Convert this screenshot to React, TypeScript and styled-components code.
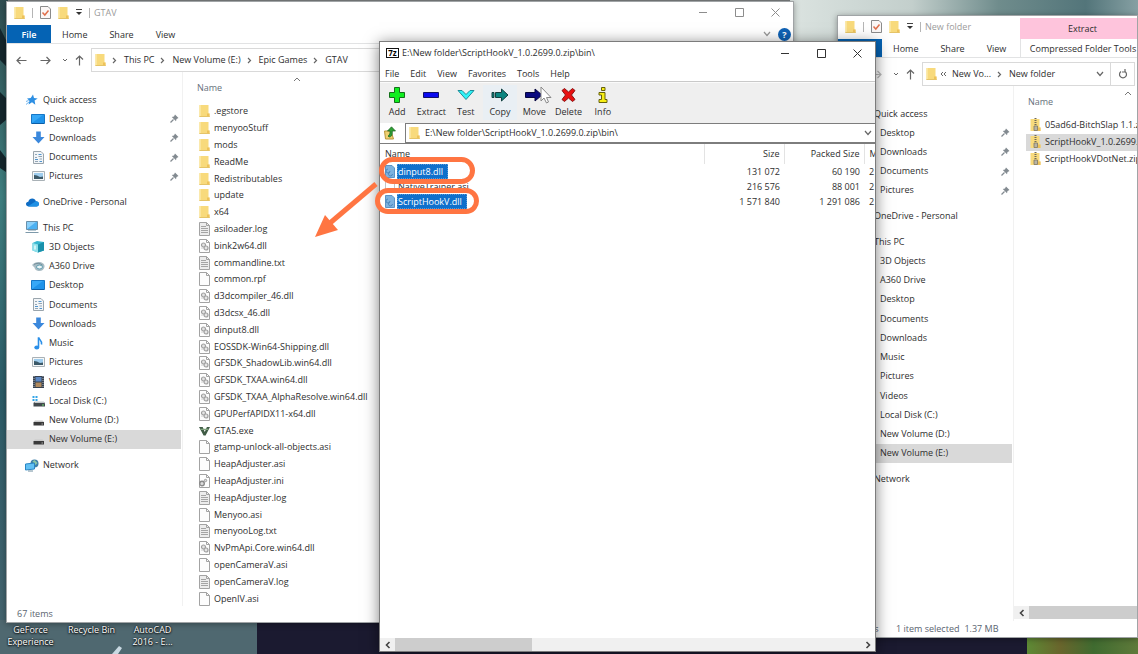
import React from "react";
import styled, { createGlobalStyle, css } from "styled-components";

const GlobalStyle = createGlobalStyle`
  * { box-sizing: border-box; }
  body {
    margin: 0;
    font-family: "Open Sans", "Noto Sans", sans-serif;
    font-size: 9px;
    line-height: 14px;
    color: #2e2e2e;
  }
  button, input {
    font: inherit;
    color: inherit;
    border: 0;
    background: none;
    padding: 0;
    margin: 0;
    text-align: left;
    white-space: nowrap;
  }
  ul { list-style: none; margin: 0; padding: 0; }
  svg { display: block; flex: none; }
`;

/* ---------- Icons ---------- */

type IconName =
  | "folder" | "zip" | "text" | "dll" | "blank" | "ini" | "gta"
  | "star" | "desktop" | "download" | "document" | "picture" | "cloud" | "pc"
  | "cube" | "a360" | "music" | "video" | "disk" | "drive" | "network";

const Sheet = ({ children, fill = "#fdfdfd" }: { children?: React.ReactNode; fill?: string }) => (
  <svg width="11" height="14" viewBox="0 0 11 14">
    <path d="M0.5 0.5H7.5L10.5 3.5V13.5H0.5Z" fill={fill} stroke="#a3a3a3" />
    <path d="M7.5 0.5V3.5H10.5" fill="none" stroke="#a3a3a3" />
    {children}
  </svg>
);

const Folder = () => (
  <svg width="11" height="14" viewBox="0 0 11 14">
    <path d="M0.5 1H9.5V9.5H10.5V13H0.5Z" fill="#f8da7c" />
    <path d="M8 9.5H10.5V13H8Z" fill="#eec25a" />
    <path d="M0.5 1H2V13H0.5Z" fill="#fbe59c" />
    <path d="M0.5 12.5H10.5" stroke="#e5c468" />
  </svg>
);

const Monitor = () => (
  <svg width="14" height="12" viewBox="0 0 14 12">
    <path d="M0.5 1.5H13.5V10.5H0.5Z" fill="#1f93ea" stroke="#1677c7" />
    <path d="M1 10L12 2H1Z" fill="#36a8f7" />
    <path d="M1 10.5H13" stroke="#0c5da5" />
  </svg>
);

const icons: Record<IconName, () => React.ReactElement> = {
  folder: Folder,
  zip: () => (
    <svg width="11" height="14" viewBox="0 0 11 14">
      <path d="M0.5 1H9.5V9.5H10.5V13H0.5Z" fill="#f8da7c" />
      <path d="M8 9.5H10.5V13H8Z" fill="#eec25a" />
      <path d="M5.5 0V9" stroke="#6f6a58" strokeWidth="2" strokeDasharray="1 1" />
      <path d="M4 8H7.5V12.5H4Z" fill="#b9b4a4" stroke="#7d7663" strokeWidth="0.8" />
    </svg>
  ),
  text: () => (
    <Sheet fill="#ececec">
      <path d="M2 4.5H7M2 6.5H9M2 8.5H9M2 10.5H9" stroke="#9c9c9c" strokeWidth="0.9" />
    </Sheet>
  ),
  dll: () => (
    <Sheet>
      <circle cx="4.5" cy="6" r="2" fill="#e4e4e4" stroke="#a0a0a0" strokeWidth="1.2" />
      <circle cx="7" cy="9" r="2" fill="#e4e4e4" stroke="#a0a0a0" strokeWidth="1.2" />
      <circle cx="3" cy="9" r="0.6" fill="#a0a0a0" />
    </Sheet>
  ),
  blank: () => <Sheet />,
  ini: () => (
    <Sheet>
      <circle cx="3" cy="9.5" r="2.3" fill="#ddd" stroke="#8a8a8a" strokeWidth="1.4" />
      <circle cx="6.5" cy="6.5" r="1.2" fill="#ddd" stroke="#9a9a9a" />
    </Sheet>
  ),
  gta: () => (
    <svg width="11" height="12" viewBox="0 0 12 12">
      <path d="M0 1.5H4L6.3 7L8.6 1.5H12L7.2 11H5Z" fill="#3f5b45" />
      <path d="M1 3.5H10.5L9.8 5H2Z" fill="#7ea27c" />
    </svg>
  ),
  star: () => (
    <svg width="12" height="12" viewBox="0 0 12 12">
      <path d="M7 0.5L8 4L11.7 4.4L8.6 6.6L9.3 10.8L6 8.2L2.6 10.6L3.4 6.8L1 4.6L4.7 4Z" fill="#2d8fe3" />
      <path d="M0 10.5L3.5 7.5M0 7.5L2.5 6.5" stroke="#6db4f0" />
    </svg>
  ),
  desktop: Monitor,
  download: () => (
    <svg width="13" height="13" viewBox="0 0 13 13">
      <path d="M4.2 0.5H8.8V6H12.5L6.5 12.5L0.5 6H4.2Z" fill="#3b88dc" />
    </svg>
  ),
  document: () => (
    <svg width="11" height="13" viewBox="0 0 11 13">
      <path d="M0.5 0.5H8L10.5 3V12.5H0.5Z" fill="#f2f5f8" stroke="#9aa5ad" />
      <path d="M5.5 3.5H8.5M2 8.5H5M6.5 10.5H9" stroke="#4f94ce" />
      <path d="M2 3.5H4M5.5 5.5H9M2 6.5H4M2 10.5H5M6.5 8H9" stroke="#93a5b4" />
    </svg>
  ),
  picture: () => (
    <svg width="13" height="10" viewBox="0 0 13 10">
      <path d="M0.5 0.5H12.5V9.5H0.5Z" fill="#f5f7f8" stroke="#a9b1b6" />
      <path d="M2 2H11V8H2Z" fill="#9fcdee" />
      <path d="M2 4L5 4.5L8 6L11 5.5V8H2Z" fill="#3c5968" />
    </svg>
  ),
  cloud: () => (
    <svg width="13" height="9" viewBox="0 0 13 9">
      <path d="M3 8.5C1 8.5 0 7.5 0 6C0 4.6 1 3.8 2.3 3.7C2.9 1.7 4.3 0.5 6.3 0.5C8 0.5 9.4 1.6 9.9 3.2C11.7 3.2 13 4.3 13 6C13 7.5 12 8.5 10.5 8.5Z" fill="#0f6cc4" />
      <path d="M2 8.3L9.8 3.3C11.7 3.2 13 4.3 13 6C13 7.5 12 8.5 10.5 8.5H3Z" fill="#2191e4" />
    </svg>
  ),
  pc: () => (
    <svg width="14" height="13" viewBox="0 0 14 13">
      <path d="M1.5 0.5H12.5V8.5H1.5Z" fill="#4db1f2" stroke="#6a90aa" />
      <path d="M2 8L11 1H2Z" fill="#8bd0fa" />
      <path d="M0.5 11.5H13.5" stroke="#7d99aa" />
      <path d="M3 9.5H11" stroke="#b9cad4" />
    </svg>
  ),
  cube: () => (
    <svg width="13" height="13" viewBox="0 0 13 13">
      <path d="M0.5 3L5 1L12 2V10.5L6 12.5L0.5 10.5Z" fill="#37b6cf" />
      <path d="M0.5 3L6 4.5V12.5L0.5 10.5Z" fill="#8fe0ea" />
      <path d="M6 4.5L12 2V10.5L6 12.5Z" fill="#1a91ab" />
      <path d="M3 5.5V9.5" stroke="#e8fbfd" strokeWidth="1.5" />
    </svg>
  ),
  a360: () => (
    <svg width="13" height="11" viewBox="0 0 13 11">
      <path d="M0 4C2 1.500 5 0.500 8 1C11 1.500 13 3.500 12.500 6C12 8.500 9.500 10.500 6.500 10C4 9.500 2.500 8 2.500 6.500Z" fill="#a9bcc4" />
      <path d="M2 3.500C4.500 1.800 8 2 10.500 4" fill="none" stroke="#76909c" />
      <ellipse cx="7.5" cy="6" rx="3" ry="2" fill="#eef5f7" stroke="#5c9db0" />
    </svg>
  ),
  music: () => (
    <svg width="11" height="13" viewBox="0 0 11 13">
      <path d="M5.5 0.5V10" stroke="#2a8fe8" strokeWidth="1.6" />
      <path d="M5.5 0.5C6 3 9.5 3.5 8.5 7.5" fill="none" stroke="#2a8fe8" strokeWidth="1.6" />
      <ellipse cx="3.8" cy="10.4" rx="2.5" ry="2" fill="#2a8fe8" />
    </svg>
  ),
  video: () => (
    <svg width="11" height="12" viewBox="0 0 11 12">
      <path d="M0 0H11V12H0Z" fill="#39424f" />
      <path d="M2.5 1H8.5V5.5H2.5Z" fill="#5b86c2" />
      <path d="M2.5 6.5H8.5V11H2.5Z" fill="#b08a5e" />
      <path d="M1 0V12M10 0V12" stroke="#a9b4bf" strokeDasharray="1 1" />
    </svg>
  ),
  disk: () => (
    <svg width="13" height="12" viewBox="0 0 13 12">
      <path d="M0.5 1H2.5V3H0.5ZM3.5 1H5.5V3H3.5ZM0.5 4H2.5V6H0.5ZM3.5 4H5.5V6H3.5Z" fill="#35a6e8" />
      <path d="M2 7H12L13 8.5V11.5H1.5V8.5Z" fill="#43494d" />
      <path d="M2.5 6.5H12V8H2.5Z" fill="#c3c8cb" />
      <path d="M10 10H12" stroke="#6fdc72" />
    </svg>
  ),
  drive: () => (
    <svg width="13" height="12" viewBox="0 0 13 12">
      <path d="M1.5 8H12V11.5H1.5Z" fill="#3b3b3b" />
      <path d="M3 6.5H10.5L12 8H1.5Z" fill="#c9c9c9" />
      <path d="M9.5 10H11" stroke="#aaa" />
    </svg>
  ),
  network: () => (
    <svg width="14" height="13" viewBox="0 0 14 13">
      <circle cx="9.500" cy="4.500" r="4" fill="#3f7fa8" />
      <path d="M7.500 2.500L9.500 1L12.500 4L10.500 6Z" fill="#8cc6a4" />
      <path d="M0.500 5L9.500 4V10L0.500 11Z" fill="#63c1f4" stroke="#2a86c4" />
      <path d="M3 12H8" stroke="#6f8ea0" />
    </svg>
  ),
};

const Icon = ({ name }: { name: IconName }) => icons[name]();

const Stroke = ({ w, h, d, color = "#666", sw = 1 }: { w: number; h: number; d: string; color?: string; sw?: number }) => (
  <svg width={w} height={h} viewBox={`0 0 ${w} ${h}`}>
    <path d={d} fill="none" stroke={color} strokeWidth={sw} />
  </svg>
);
const ChevronRight = () => <Stroke w={5} h={7} d="M1 1L3.5 3.5L1 6" sw={1.2} />;
const ChevronLeft = () => <Stroke w={6} h={8} d="M4.5 1L1.5 4L4.5 7" sw={1.6} color="#444" />;
const ScrollRight = () => <Stroke w={6} h={8} d="M1.5 1L4.5 4L1.5 7" sw={1.6} color="#444" />;
const ChevronDown = ({ color }: { color?: string }) => <Stroke w={8} h={6} d="M1 1L4 4.5L7 1" sw={1.2} color={color} />;
const ChevronUp = () => <Stroke w={8} h={5} d="M1 4L4 1L7 4" color="#777" />;

const Pin = () => (
  <svg width="9" height="9" viewBox="0 0 9 9">
    <path d="M5 0.5L8.5 4L7.5 4.5L6.5 5L6 7.2L1.8 3L4 2.5Z" fill="#828a90" />
    <path d="M3.5 5.5L0.5 8.5" stroke="#828a90" strokeWidth="1.2" />
  </svg>
);

const CheckSheet = () => (
  <svg width="11" height="13" viewBox="0 0 11 13">
    <path d="M0.5 0.5H8L10.5 3V12.5H0.5Z" fill="#fbf7f6" stroke="#8b8b8b" />
    <path d="M2.5 6.5L4.8 9L8.5 4.5" fill="none" stroke="#e0704c" strokeWidth="1.5" />
  </svg>
);

/* ---------- Desktop ---------- */

const Desktop = styled.main`
  position: relative;
  min-height: 100vh;
  overflow: hidden;
  background: #1b1b31;
`;

const Wallpaper = styled.svg`
  position: absolute;
  inset: 0;
  width: 100%;
  height: 100%;
`;

const Shortcuts = styled.ul`
  position: absolute;
  left: 0;
  bottom: 6px;
  display: flex;
`;

const Shortcut = styled.li`
  width: 61px;
  padding: 0 5px;
  text-align: center;
  line-height: 12px;
  color: #fff;
  text-shadow: 0 1px 2px #000, 0 0 2px #000;
`;

const Window = styled.section<{ $left: number; $top: number; $bottom: number; $width?: number; $active?: boolean }>`
  position: absolute;
  left: ${(p) => p.$left}px;
  top: ${(p) => p.$top}px;
  bottom: ${(p) => p.$bottom}px;
  ${(p) => (p.$width ? css`width: ${p.$width}px;` : css`right: 0;`)}
  display: flex;
  flex-direction: column;
  overflow: hidden;
  background: #fff;
  border: 1px solid ${(p) => (p.$active ? "#7c7c7c" : "#a0a4a6")};
  box-shadow: ${(p) => (p.$active ? "0 2px 14px rgba(0,0,0,.5)" : "0 1px 6px rgba(0,0,0,.35)")};
`;

/* ---------- Explorer ---------- */

const Header = styled.header`
  display: flex;
  flex: none;
  border-bottom: 1px solid #e2e3e4;
`;

const HeaderMain = styled.div<{ $fixed?: boolean }>`
  flex: ${(p) => (p.$fixed ? "0 0 182px" : "1")};
  min-width: 0;
`;

const TitleBar = styled.div`
  display: flex;
  align-items: center;
  height: 23px;
  padding: 0 0 2px 7px;
`;

const QuickTools = styled.div`
  display: flex;
  align-items: center;
  gap: 7px;
  flex: 1;
`;

const Separator = styled.span`
  width: 1px;
  height: 10px;
  background: #b5b5b5;
`;

const WindowTitle = styled.h1`
  margin: 0 0 0 -3px;
  font-size: 9px;
  font-weight: 400;
  color: #9b9b9b;
  white-space: nowrap;
`;

const WindowButtonGroup = styled.div`
  display: flex;
`;

const WindowButton = styled.button`
  width: 36px;
  height: 20px;
  display: flex;
  align-items: center;
  justify-content: center;
`;

const Tabs = styled.div`
  display: flex;
  align-items: center;
  height: 18px;
`;

const Tab = styled.button<{ $file?: boolean }>`
  height: 18px;
  padding: 1px 11px 0;
  ${(p) => p.$file && css`
    width: 44px;
    padding: 1px 0 0;
    text-align: center;
    background: #0563b4;
    color: #fff;
    font-weight: 600;
  `}
`;

const TabsEnd = styled.div`
  margin-left: auto;
  padding-right: 2px;
  display: flex;
  align-items: center;
  gap: 7px;
`;

const HelpButton = styled.button`
  width: 13px;
  height: 13px;
  border-radius: 50%;
  background: #0f62b5;
  color: #fff;
  font-weight: 700;
  text-align: center;
  line-height: 13px;
`;

const ContextTab = styled.div`
  flex: 0 0 125px;
  padding-top: 2px;
  display: flex;
  flex-direction: column;
`;

const ContextTitle = styled.div`
  height: 21px;
  line-height: 21px;
  text-align: center;
  background: #fec4dc;
`;

const ContextButton = styled.button`
  height: 18px;
  padding-top: 1px;
  text-align: center;
  border-left: 1px solid #e2e3e4;
`;

const AddressRow = styled.nav`
  display: flex;
  align-items: center;
  flex: none;
  height: 28px;
  padding: 4px 2px 0 7px;
`;

const NavButton = styled.button<{ $w: number }>`
  width: ${(p) => p.$w}px;
  height: 20px;
  display: flex;
  align-items: center;
  justify-content: center;
`;

const AddressBox = styled.div`
  flex: 1;
  min-width: 0;
  height: 24px;
  padding-left: 3px;
  display: flex;
  align-items: center;
  border: 1px solid #d9d9d9;
`;

const Crumb = styled.span<{ $collapsed?: boolean }>`
  display: flex;
  align-items: center;
  gap: ${(p) => (p.$collapsed ? 5 : 7)}px;
  padding-left: ${(p) => (p.$collapsed ? 3 : 6)}px;
`;

const AddressEnd = styled.div`
  margin-left: auto;
  height: 22px;
  display: flex;
  align-items: center;
`;

const RefreshButton = styled(NavButton)`
  margin-left: 6px;
  height: 22px;
  border-left: 1px solid #d9d9d9;
`;

const Body = styled.div`
  display: flex;
  flex: 1;
  min-height: 0;
`;

const Sidebar = styled.aside`
  flex: 0 0 176px;
  padding-top: 18px;
  display: flex;
  flex-direction: column;
  gap: 6px;
  border-right: 1px solid #f1f1f1;
`;

const NavGroup = styled.ul<{ $height: number }>`
  flex: none;
  height: ${(p) => p.$height}px;
  display: grid;
  grid-auto-rows: 1fr;
`;

const NavItem = styled.button<{ $child?: boolean; $selected?: boolean }>`
  display: flex;
  align-items: center;
  width: 174px;
  height: 100%;
  padding: 0 2px 0 ${(p) => (p.$child ? 24 : 18)}px;
  background: ${(p) => (p.$selected ? "#d9d9d9" : "none")};
`;

const NavIcon = styled.span`
  width: 14px;
  margin-right: 4px;
  display: flex;
  justify-content: center;
`;

const PinSlot = styled.span`
  margin-left: auto;
`;

const ListPane = styled.div`
  flex: 1;
  min-width: 0;
  display: flex;
  flex-direction: column;
`;

const ListScroller = styled.div`
  flex: 1;
  min-height: 0;
  overflow: hidden;
  padding-left: 12px;
`;

const ListHeader = styled.div`
  position: relative;
  height: 31px;
  padding: 9px 0 0 2px;
  color: #66707c;
`;

const SortMark = styled.span`
  position: absolute;
  left: 98px;
  top: 5px;
`;

const FileList = styled.ul`
  height: 504px;
  display: grid;
  grid-template-rows: repeat(30, 1fr);
`;

const FileRow = styled.button<{ $selected?: boolean }>`
  display: flex;
  align-items: center;
  gap: 4px;
  width: 100%;
  height: 100%;
  padding-left: 4px;
  background: ${(p) => (p.$selected ? "#d9d9d9" : "none")};
`;

const ScrollBar = styled.div<{ $inset?: boolean }>`
  display: flex;
  flex: none;
  height: 13px;
  margin-bottom: ${(p) => (p.$inset ? 2 : 0)}px;
  background: #f0f0f0;
`;

const ScrollButton = styled.button`
  width: 15px;
  height: 13px;
  display: flex;
  align-items: center;
  justify-content: center;
`;

const ScrollThumb = styled.div<{ $width?: number }>`
  height: 13px;
  background: #cdcdcd;
  ${(p) => (p.$width ? css`width: ${p.$width}px; margin-right: auto;` : css`flex: 1;`)}
`;

const StatusBar = styled.footer`
  flex: none;
  display: flex;
  height: 16px;
  line-height: 16px;
  padding-left: 10px;
  color: #5a6470;
  white-space: nowrap;
`;

const StatusItem = styled.span`
  margin-right: 5px;
`;

const StatusCount = styled(StatusItem)`
  width: 43px;
`;

type Entry = [IconName, string];

const quickAccess: Entry[] = [
  ["desktop", "Desktop"],
  ["download", "Downloads"],
  ["document", "Documents"],
  ["picture", "Pictures"],
];

const thisPc: Entry[] = [
  ["cube", "3D Objects"],
  ["a360", "A360 Drive"],
  ["desktop", "Desktop"],
  ["document", "Documents"],
  ["download", "Downloads"],
  ["music", "Music"],
  ["picture", "Pictures"],
  ["video", "Videos"],
  ["disk", "Local Disk (C:)"],
  ["drive", "New Volume (D:)"],
  ["drive", "New Volume (E:)"],
];

const gameFiles: Entry[] = [
  ["folder", ".egstore"],
  ["folder", "menyooStuff"],
  ["folder", "mods"],
  ["folder", "ReadMe"],
  ["folder", "Redistributables"],
  ["folder", "update"],
  ["folder", "x64"],
  ["text", "asiloader.log"],
  ["dll", "bink2w64.dll"],
  ["text", "commandline.txt"],
  ["blank", "common.rpf"],
  ["dll", "d3dcompiler_46.dll"],
  ["dll", "d3dcsx_46.dll"],
  ["dll", "dinput8.dll"],
  ["dll", "EOSSDK-Win64-Shipping.dll"],
  ["dll", "GFSDK_ShadowLib.win64.dll"],
  ["dll", "GFSDK_TXAA.win64.dll"],
  ["dll", "GFSDK_TXAA_AlphaResolve.win64.dll"],
  ["dll", "GPUPerfAPIDX11-x64.dll"],
  ["gta", "GTA5.exe"],
  ["blank", "gtamp-unlock-all-objects.asi"],
  ["blank", "HeapAdjuster.asi"],
  ["ini", "HeapAdjuster.ini"],
  ["text", "HeapAdjuster.log"],
  ["blank", "Menyoo.asi"],
  ["text", "menyooLog.txt"],
  ["dll", "NvPmApi.Core.win64.dll"],
  ["blank", "openCameraV.asi"],
  ["text", "openCameraV.log"],
  ["blank", "OpenIV.asi"],
];

const zipFiles: Entry[] = [
  ["zip", "05ad6d-BitchSlap 1.1.zip"],
  ["zip", "ScriptHookV_1.0.2699.0.zip"],
  ["zip", "ScriptHookVDotNet.zip"],
];

const SideEntry = ({ icon, label, child, pinned, selected }: {
  icon: IconName; label: string; child?: boolean; pinned?: boolean; selected?: boolean;
}) => (
  <li>
    <NavItem type="button" $child={child} $selected={selected}>
      <NavIcon><Icon name={icon} /></NavIcon>
      {label}
      {pinned && <PinSlot><Pin /></PinSlot>}
    </NavItem>
  </li>
);

const WindowButtons = ({ color }: { color: string }) => (
  <WindowButtonGroup>
    <WindowButton type="button" aria-label="Minimize"><Stroke w={9} h={9} d="M0 4.5H8" color={color} /></WindowButton>
    <WindowButton type="button" aria-label="Maximize"><Stroke w={9} h={9} d="M0.5 0.5H8.5V8.5H0.5Z" color={color} /></WindowButton>
    <WindowButton type="button" aria-label="Close"><Stroke w={9} h={9} d="M0.5 0.5L8.5 8.5M8.5 0.5L0.5 8.5" color={color} /></WindowButton>
  </WindowButtonGroup>
);

const Explorer = ({ title, left, top, bottom, width, crumbs, collapsed, contextual, files, selectedFile, status }: {
  title: string; left: number; top: number; bottom: number; width?: number; crumbs: string[];
  collapsed?: boolean; contextual?: boolean; files: Entry[]; selectedFile?: number; status: string[];
}) => (
  <Window $left={left} $top={top} $bottom={bottom} $width={width} aria-label={title}>
    <Header>
      <HeaderMain $fixed={contextual}>
        <TitleBar>
          <QuickTools>
            <Folder />
            <Separator />
            <CheckSheet />
            <Folder />
            <svg width="6" height="7" viewBox="0 0 6 7"><path d="M0 0.5H6" stroke="#444" /><path d="M0 3H6L3 6Z" fill="#333" /></svg>
            <Separator />
            <WindowTitle>{title}</WindowTitle>
          </QuickTools>
          {!contextual && <WindowButtons color="#8d8d8d" />}
        </TitleBar>
        <Tabs>
          <Tab type="button" $file>File</Tab>
          <Tab type="button">Home</Tab>
          <Tab type="button">Share</Tab>
          <Tab type="button">View</Tab>
          {!contextual && (
            <TabsEnd>
              <ChevronDown color="#999" />
              <HelpButton type="button">?</HelpButton>
            </TabsEnd>
          )}
        </Tabs>
      </HeaderMain>
      {contextual && (
        <ContextTab>
          <ContextTitle>Extract</ContextTitle>
          <ContextButton type="button">Compressed Folder Tools</ContextButton>
        </ContextTab>
      )}
    </Header>
    <AddressRow aria-label="Address">
      <NavButton type="button" $w={14} aria-label="Back"><Stroke w={11} h={9} d="M10.5 4.5H1M4.5 1L1 4.5L4.5 8" sw={1.2} /></NavButton>
      <NavButton type="button" $w={34} aria-label="Forward"><Stroke w={11} h={9} d="M0.5 4.5H10M6.5 1L10 4.5L6.5 8" sw={1.2} color={contextual ? "#bbb" : "#666"} /></NavButton>
      <NavButton type="button" $w={6} aria-label="Recent"><Stroke w={6} h={5} d="M1 1L3 3L5 1" /></NavButton>
      <NavButton type="button" $w={23} aria-label="Up"><Stroke w={9} h={11} d="M4.5 10.5V1M1 4.5L4.5 1L8 4.5" sw={1.2} /></NavButton>
      <AddressBox>
        <Folder />
        {crumbs.map((c, i) => (
          <Crumb key={c} $collapsed={collapsed && i === 0}>
            {collapsed && i === 0 ? <Stroke w={7} h={7} d="M3 1L1 3L3 5M6 1L4 3L6 5" /> : <ChevronRight />}
            <button type="button">{c}</button>
          </Crumb>
        ))}
        <AddressEnd>
          <ChevronDown />
          <RefreshButton type="button" $w={24} aria-label="Refresh">
            <Stroke w={10} h={10} d="M3 2.5A3.5 3.5 0 1 0 7 2.5M7 0V3H4" sw={1.2} />
          </RefreshButton>
        </AddressEnd>
      </AddressBox>
    </AddressRow>
    <Body>
      <Sidebar>
        <NavGroup $height={96}>
          <SideEntry icon="star" label="Quick access" />
          {quickAccess.map(([icon, label]) => <SideEntry key={label} icon={icon} label={label} child pinned />)}
        </NavGroup>
        <NavGroup $height={20}>
          <SideEntry icon="cloud" label="OneDrive - Personal" />
        </NavGroup>
        <NavGroup $height={231}>
          <SideEntry icon="pc" label="This PC" />
          {thisPc.map(([icon, label]) => (
            <SideEntry key={label} icon={icon} label={label} child selected={label === "New Volume (E:)"} />
          ))}
        </NavGroup>
        <NavGroup $height={20}>
          <SideEntry icon="network" label="Network" />
        </NavGroup>
      </Sidebar>
      <ListPane>
        <ListScroller>
          <ListHeader>
            <button type="button">Name</button>
            <SortMark><ChevronUp /></SortMark>
          </ListHeader>
          <FileList>
            {files.map(([icon, name], i) => (
              <li key={name}>
                <FileRow type="button" $selected={i === selectedFile}>
                  <Icon name={icon} />
                  {name}
                </FileRow>
              </li>
            ))}
          </FileList>
        </ListScroller>
        {contextual && (
          <ScrollBar $inset>
            <ScrollButton type="button" aria-label="Scroll left"><ChevronLeft /></ScrollButton>
            <ScrollThumb />
          </ScrollBar>
        )}
      </ListPane>
    </Body>
    <StatusBar>
      <StatusCount>{status[0]}</StatusCount>
      {status.slice(1).map((s) => <StatusItem key={s}>{s}</StatusItem>)}
    </StatusBar>
  </Window>
);

/* ---------- Archive manager ---------- */

const ArchiveTitle = styled.div`
  flex: none;
  display: flex;
  align-items: center;
  height: 24px;
  padding: 0 0 2px 6px;
`;

const ArchiveName = styled.h1`
  flex: 1;
  margin: 0 0 0 3px;
  font-size: 9px;
  font-weight: 400;
  white-space: nowrap;
`;

const ZipBadge = styled.span`
  width: 13px;
  height: 10px;
  border: 1px solid #111;
  background: #fff;
  color: #000;
  font-size: 8px;
  font-weight: 700;
  line-height: 8px;
  text-align: center;
`;

const MenuBar = styled.div`
  flex: none;
  display: flex;
  gap: 11px;
  height: 16px;
  padding: 0 0 0 5px;
  border-bottom: 1px solid #c9c9c9;
`;

const ToolBar = styled.div`
  flex: none;
  height: 41px;
  padding-top: 2px;
  background: #efefef;
  border-top: 1px solid #fafafa;
`;

const ToolGrid = styled.div`
  display: grid;
  grid-template-columns: repeat(7, 1fr);
  width: 240px;
`;

const Tool = styled.button<{ $hover?: boolean }>`
  display: flex;
  flex-direction: column;
  align-items: center;
  height: 35px;
  background: ${(p) => (p.$hover ? "#e9eff4" : "none")};
`;

const ToolIcon = styled.span`
  height: 20px;
  display: flex;
  align-items: center;
`;

const PathRow = styled.div`
  flex: none;
  display: flex;
  align-items: center;
  height: 20px;
`;

const UpButton = styled.button`
  width: 25px;
  height: 20px;
  padding-left: 4px;
`;

const PathBox = styled.label`
  flex: 1;
  display: flex;
  align-items: center;
  gap: 5px;
  height: 20px;
  padding: 0 3px;
  border: 1px solid #7d7d7d;
  border-right: 0;
`;

const PathInput = styled.input`
  flex: 1;
  min-width: 0;
  outline: 0;
`;

const FileArea = styled.div`
  flex: 1;
  min-height: 0;
  overflow: hidden;
  border-top: 1px solid #7d7d7d;
`;

const FileTable = styled.table`
  width: 100%;
  table-layout: fixed;
  border-collapse: collapse;
  white-space: nowrap;
  th {
    height: 20px;
    padding: 0 4px 0 5px;
    font-weight: 400;
    text-align: right;
    border-right: 1px solid #e3e3e3;
  }
  td {
    height: 15px;
    padding: 0 4px 0 5px;
    line-height: 15px;
    text-align: right;
    overflow: hidden;
  }
  th:first-child { text-align: left; }
  td:first-child { text-align: left; }
  th:last-child { text-align: left; border: 0; overflow: hidden; }
  td:last-child { text-align: left; }
`;

const FileName = styled.span<{ $selected?: boolean }>`
  display: inline-block;
  padding: 0 2px 0 1px;
  height: 15px;
  ${(p) => p.$selected && css`
    background: #0f70cc;
    color: #fff;
    outline: 1px dotted #5c9ad6;
    outline-offset: -1px;
    padding-right: 5px;
  `}
`;

const NameCell = styled.span`
  display: flex;
  align-items: center;
  gap: 2px;
  height: 15px;
`;

const MiniFile = ({ tinted }: { tinted?: boolean }) => (
  <svg width="10" height="13" viewBox="0 0 10 13">
    <path d="M0.5 0.5H7L9.5 3V12.5H0.5Z" fill={tinted ? "#7db2df" : "#fff"} stroke={tinted ? "#5b93c6" : "#c4c4c4"} />
    {tinted && <path d="M3 4A2 2 0 1 0 5 6M5 7A2 2 0 1 0 7.5 9" fill="none" stroke="#4a86be" />}
  </svg>
);

const tools: { label: string; art: React.ReactElement }[] = [
  { label: "Add", art: <svg width="16" height="16" viewBox="0 0 16 16"><path d="M5.5 0.5H10.5V5.5H15.5V10.5H10.5V15.5H5.5V10.5H0.5V5.5H5.5Z" fill="#10ee20" stroke="#13701a" /></svg> },
  { label: "Extract", art: <svg width="16" height="8" viewBox="0 0 16 8"><path d="M0.5 1.5H15.5V6.5H0.5Z" fill="#0a0af0" stroke="#10106a" /></svg> },
  { label: "Test", art: <svg width="18" height="12" viewBox="0 0 18 12"><path d="M1 1.5H5L9 5.5L13 1.5H17L9 10.5Z" fill="#2ff3f7" stroke="#1d8d98" /></svg> },
  { label: "Copy", art: <svg width="18" height="14" viewBox="0 0 18 14"><path d="M1 4.5H3V9.5H1ZM4.5 4.5H10.5V1L17 7L10.5 13V9.5H4.5Z" fill="#0b8580" stroke="#123f3e" /></svg> },
  { label: "Move", art: <svg width="18" height="14" viewBox="0 0 18 14"><path d="M0.5 4.5H10V1L17 7L10 13V9.5H0.5Z" fill="#0a0a80" stroke="#06063f" /></svg> },
  { label: "Delete", art: <svg width="15" height="14" viewBox="0 0 15 14"><path d="M3.5 0.5L7.5 4L11.5 0.5L14 2.5L10.5 7L14 11.5L11.5 13.5L7.5 10L3.5 13.5L1 11.5L4.5 7L1 2.5Z" fill="#e81010" stroke="#8a1414" /></svg> },
  { label: "Info", art: <svg width="10" height="16" viewBox="0 0 10 16"><path d="M3.5 0.5H7V3.5H3.5ZM1 5.5H7V12.5H9V15.5H1V12.5H3.5V8H1Z" fill="#f7ee14" stroke="#66610d" /></svg> },
];

const archiveRows = [
  { name: "dinput8.dll", size: "131 072", packed: "60 190", selected: true },
  { name: "NativeTrainer.asi", size: "216 576", packed: "88 001", selected: false },
  { name: "ScriptHookV.dll", size: "1 571 840", packed: "1 291 086", selected: true },
];

const archivePath = "E:\\New folder\\ScriptHookV_1.0.2699.0.zip\\bin\\";

const Archive = () => (
  <Window $left={379} $top={41} $bottom={2} $width={497} $active aria-label="Archive">
    <ArchiveTitle>
      <ZipBadge>7z</ZipBadge>
      <ArchiveName>{archivePath}</ArchiveName>
      <WindowButtons color="#333" />
    </ArchiveTitle>
    <MenuBar>
      {["File", "Edit", "View", "Favorites", "Tools", "Help"].map((m) => <button type="button" key={m}>{m}</button>)}
    </MenuBar>
    <ToolBar>
      <ToolGrid>
        {tools.map(({ label, art }) => (
          <Tool type="button" key={label} $hover={label === "Copy"}>
            <ToolIcon>{art}</ToolIcon>
            {label}
          </Tool>
        ))}
      </ToolGrid>
    </ToolBar>
    <PathRow>
      <UpButton type="button" aria-label="Up one level">
        <svg width="13" height="14" viewBox="0 0 13 14">
          <path d="M0.5 5H7L9.5 13H1.5Z" fill="#efd070" stroke="#b8953a" />
          <path d="M5 11C8 11 8.5 8 8.3 5H11.5L7.5 0.8L3.5 5H6C6 7 6 9 4 10Z" fill="#2f9f35" stroke="#1c6121" strokeWidth="0.7" />
        </svg>
      </UpButton>
      <PathBox>
        <Folder />
        <PathInput aria-label="Path" defaultValue={archivePath} />
        <ChevronDown />
      </PathBox>
    </PathRow>
    <FileArea>
      <FileTable>
        <colgroup>
          <col />
          <col width="80" />
          <col width="80" />
          <col width="11" />
        </colgroup>
        <thead>
          <tr><th>Name</th><th>Size</th><th>Packed Size</th><th>M</th></tr>
        </thead>
        <tbody>
          {archiveRows.map((r) => (
            <tr key={r.name}>
              <td>
                <NameCell>
                  <MiniFile tinted={r.selected} />
                  <FileName $selected={r.selected}>{r.name}</FileName>
                </NameCell>
              </td>
              <td>{r.size}</td>
              <td>{r.packed}</td>
              <td>2</td>
            </tr>
          ))}
        </tbody>
      </FileTable>
    </FileArea>
    <ScrollBar>
      <ScrollButton type="button" aria-label="Scroll left"><ChevronLeft /></ScrollButton>
      <ScrollThumb $width={137} />
      <ScrollButton type="button" aria-label="Scroll right"><ScrollRight /></ScrollButton>
    </ScrollBar>
  </Window>
);

const Markup = styled.svg`
  position: absolute;
  left: 300px;
  top: 80px;
  pointer-events: none;
`;

const Pointer = styled.svg`
  position: absolute;
  left: 540px;
  top: 86px;
  pointer-events: none;
`;

export default function App() {
  return (
    <Desktop>
      <GlobalStyle />
      <Wallpaper viewBox="0 0 1138 654" preserveAspectRatio="none" aria-hidden="true">
        <defs>
          <linearGradient id="sky" x1="0" x2="1">
            <stop offset="0" stopColor="#dbe3e0" />
            <stop offset="0.35" stopColor="#c3cfcc" />
            <stop offset="0.6" stopColor="#6f8c8c" />
            <stop offset="0.85" stopColor="#53757a" />
            <stop offset="1" stopColor="#86a0a3" />
          </linearGradient>
          <linearGradient id="sea" x1="0" y1="0" x2="0" y2="1">
            <stop offset="0" stopColor="#2f4d50" />
            <stop offset="0.3" stopColor="#3f7f80" />
            <stop offset="0.6" stopColor="#2c5c68" />
            <stop offset="1" stopColor="#47656f" />
          </linearGradient>
          <linearGradient id="leaf" x1="0" x2="1">
            <stop offset="0" stopColor="#5d8a35" />
            <stop offset="0.3" stopColor="#69652c" />
            <stop offset="0.6" stopColor="#3f6b30" />
            <stop offset="1" stopColor="#5f7a3a" />
          </linearGradient>
        </defs>
        <rect width="794" height="4" fill="#7c7f80" />
        <rect x="790" width="348" height="60" fill="url(#sky)" />
        <rect width="8" height="654" fill="url(#sea)" />
        <path d="M0 28L6 40V66L0 60ZM0 92L6 98V120L0 125ZM0 150L6 158V172L0 168Z" fill="#14262c" />
        <rect y="620" width="257" height="34" fill="#4f6870" />
        <path d="M257 620H1027V654H257Z" fill="#1b1a30" />
        <path d="M112 654L119 646L122 648L118 654Z" fill="#c9d9e2" />
        <rect x="1027" y="630" width="111" height="24" fill="url(#leaf)" />
      </Wallpaper>
      <Shortcuts>
        <Shortcut>GeForce Experience</Shortcut>
        <Shortcut>Recycle Bin</Shortcut>
        <Shortcut>AutoCAD 2016 - E...</Shortcut>
      </Shortcuts>
      <Explorer
        title="GTAV" left={6} top={1} bottom={31} width={788}
        crumbs={["This PC", "New Volume (E:)", "Epic Games", "GTAV"]}
        files={gameFiles} status={["67 items"]}
      />
      <Explorer
        title="New folder" left={837} top={15} bottom={16} contextual collapsed
        crumbs={["New Vo...", "New folder"]}
        files={zipFiles} selectedFile={1} status={["3 items", "1 item selected", "1.37 MB"]}
      />
      <Archive />
      <Markup width="190" height="170" viewBox="300 80 190 170" aria-hidden="true">
        <path d="M376 184L330 223" stroke="#ff7542" strokeWidth="5" />
        <path d="M315 237L325 215L338 230Z" fill="#ff7542" />
        <rect x="381.5" y="159.5" width="91" height="22" rx="11" fill="none" stroke="#ff7542" strokeWidth="5" />
        <rect x="377.5" y="190.5" width="99" height="21" rx="10.5" fill="none" stroke="#ff7542" strokeWidth="5" />
      </Markup>
      <Pointer width="12" height="18" viewBox="0 0 12 18" aria-hidden="true">
        <path d="M1 1V15L4 12L6.5 17L8.5 16L6.5 11.5H11Z" fill="#fff" stroke="#888" />
      </Pointer>
    </Desktop>
  );
}
